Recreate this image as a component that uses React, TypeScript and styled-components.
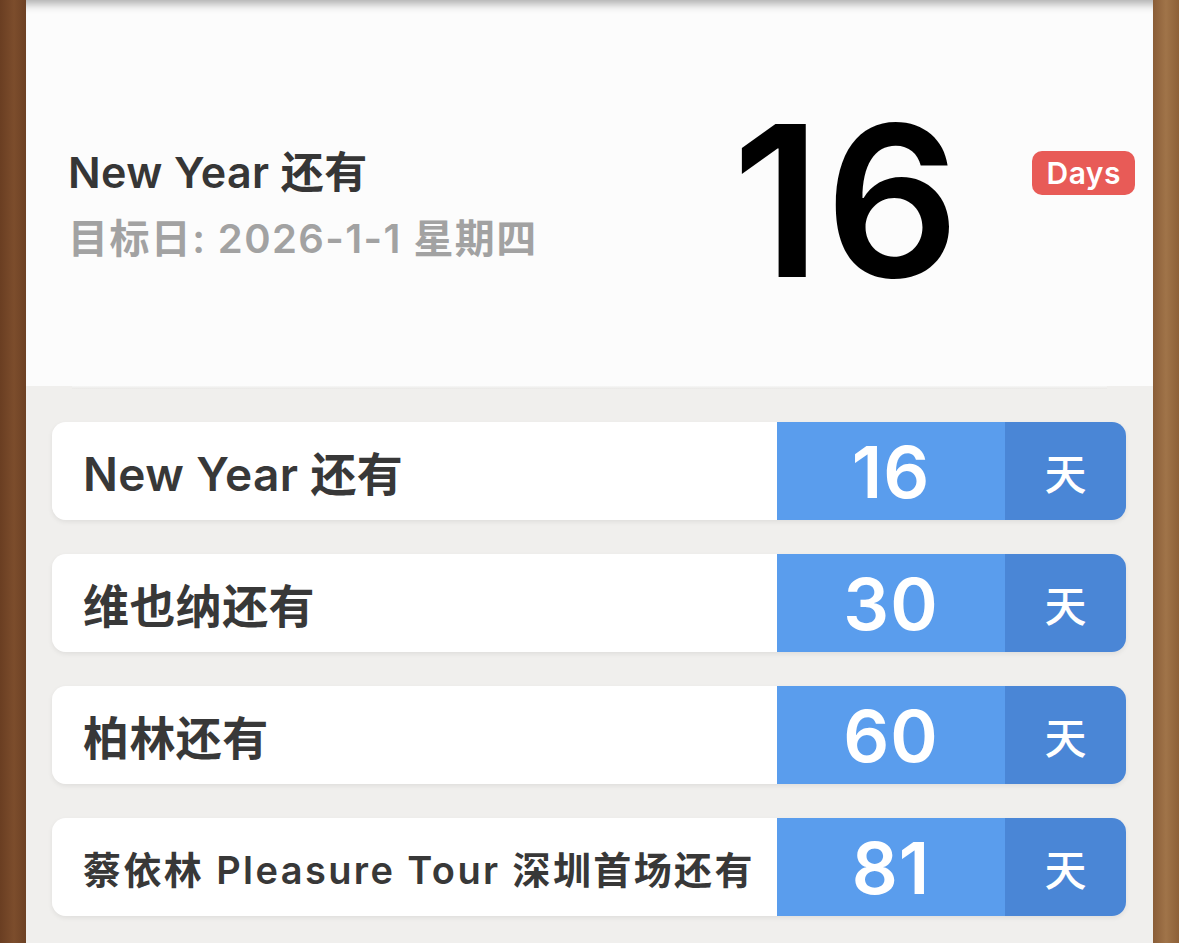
import React from "react";
import styled, { createGlobalStyle } from "styled-components";

const GlobalStyle = createGlobalStyle`
  html, body { margin: 0; padding: 0; }
  body {
    height: 943px;
    overflow: hidden;
    background: linear-gradient(90deg, #6a3e22 0px, #7c4d2c 14px, #6d4124 26px, #8a5d37 1153px, #a07449 1166px, #8d6038 1179px);
    font-family: Inter, "Noto Sans CJK SC", sans-serif;
  }
  #root { height: 100%; }
`;

const Panel = styled.main`
  margin: 0 26px;
  height: 943px;
  display: flex;
  flex-direction: column;
  background: #f0efed;
`;

const Header = styled.header`
  height: 386px;
  flex: none;
  display: flex;
  align-items: center;
  padding: 0 18px 0 42px;
  background: #fcfcfc;
  box-shadow: inset 0 12px 10px -8px rgba(0, 0, 0, 0.32);
`;

const Divider = styled.div`
  height: 3px;
  margin: 0 46px;
  background: linear-gradient(180deg, #f7f7f6 0%, #e9e8e6 100%);
  flex: none;
`;

const Info = styled.div`
  flex: 1;
  display: flex;
  flex-direction: column;
  gap: 18px;
  margin-top: 24px;
`;

const Title = styled.div`
  font-size: 43px;
  font-weight: 600;
  color: #363636;
  line-height: 50px;
  letter-spacing: 0.4px;
`;

const Subtitle = styled.div`
  font-size: 40px;
  font-weight: 600;
  color: #a2a2a2;
  line-height: 48px;
  letter-spacing: 1.4px;
`;

const BigNumber = styled.div`
  font-size: 210px;
  font-weight: 600;
  line-height: 1;
  color: #000;
  letter-spacing: 4px;
  margin-top: 16px;
`;

const Badge = styled.span`
  align-self: flex-start;
  margin: 151px 0 0 69px;
  height: 44px;
  padding: 0 14px;
  display: flex;
  align-items: center;
  background: #e85b57;
  border-radius: 10px;
  color: #fff;
  font-size: 30px;
  font-weight: 600;
  letter-spacing: 0.5px;
`;

const List = styled.section`
  display: flex;
  flex-direction: column;
  gap: 34px;
  padding: 33px 27px 0 26px;
`;

const Row = styled.div`
  height: 98px;
  display: flex;
  border-radius: 14px;
  overflow: hidden;
  box-shadow: 0 2px 5px rgba(0, 0, 0, 0.07);
`;

const Label = styled.div<{ $size: number; $spacing: number }>`
  flex: 1;
  display: flex;
  align-items: center;
  padding-left: 31px;
  background: #fff;
  color: #383838;
  font-size: ${(p) => p.$size}px;
  letter-spacing: ${(p) => p.$spacing}px;
  font-weight: 600;
  white-space: nowrap;
  overflow: hidden;
`;

const Count = styled.div`
  width: 228px;
  flex: none;
  display: flex;
  align-items: center;
  justify-content: center;
  background: #5a9ded;
  color: #fff;
  font-size: 72px;
  font-weight: 600;
  letter-spacing: 1px;
`;

const Unit = styled.div`
  width: 121px;
  flex: none;
  display: flex;
  align-items: center;
  justify-content: center;
  background: #4a86d6;
  color: #fff;
  font-size: 42px;
  font-weight: 500;
  font-family: "Noto Sans CJK SC", sans-serif;
`;

const events = [
  { name: "New Year 还有", days: 16, size: 46, spacing: 0.4 },
  { name: "维也纳还有", days: 30, size: 46, spacing: 0.4 },
  { name: "柏林还有", days: 60, size: 46, spacing: 0.4 },
  { name: "蔡依林 Pleasure Tour 深圳首场还有", days: 81, size: 38, spacing: 2.4 },
];

export default function App() {
  return (
    <>
      <GlobalStyle />
      <Panel>
        <Header>
          <Info>
            <Title>New Year 还有</Title>
            <Subtitle>目标日: 2026-1-1 星期四</Subtitle>
          </Info>
          <BigNumber>16</BigNumber>
          <Badge>Days</Badge>
        </Header>
        <Divider />
        <List>
          {events.map((e) => (
            <Row key={e.name}>
              <Label $size={e.size} $spacing={e.spacing}>
                {e.name}
              </Label>
              <Count>{e.days}</Count>
              <Unit>天</Unit>
            </Row>
          ))}
        </List>
      </Panel>
    </>
  );
}
